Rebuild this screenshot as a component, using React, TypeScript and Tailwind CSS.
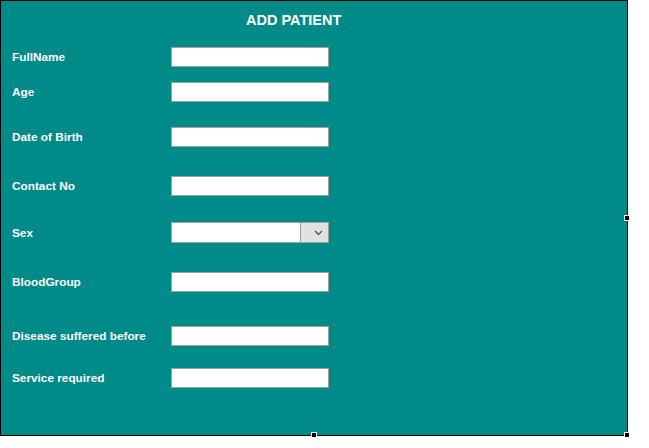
import { useState } from 'react';

const fields = [
  { label: 'FullName', mt: 'mt-[16px]' },
  { label: 'Age', mt: 'mt-[15px]' },
  { label: 'Date of Birth', mt: 'mt-[25px]' },
  { label: 'Contact No', mt: 'mt-[29px]' },
  { label: 'Sex', mt: 'mt-[26px]', select: true },
  { label: 'BloodGroup', mt: 'mt-[29px]' },
  { label: 'Disease suffered before', mt: 'mt-[34px]' },
  { label: 'Service required', mt: 'mt-[22px]' },
];

function Handle({ className }: { className: string }) {
  return <div className={`absolute w-[6px] h-[6px] bg-black border border-white ${className}`} />;
}

export default function App() {
  const [values, setValues] = useState<Record<string, string>>({});

  return (
    <div className="w-[649px] h-[448px] bg-white relative overflow-hidden font-['Liberation_Sans',Arial,sans-serif]">
      <div className="w-[628px] h-[436px] bg-[#008a88] border border-black flex flex-col">
        {/* Title */}
        <div className="mt-[10px] h-[20px] pl-[245px] flex items-center text-white font-bold text-[14.5px]">
          ADD PATIENT
        </div>

        {fields.map((f) => (
          <div key={f.label} className={`${f.mt} flex items-center ${f.select ? 'h-[21px]' : 'h-[20px]'}`}>
            <div className="w-[170px] pl-[11px] pt-[2px] text-white font-bold text-[11.8px] leading-none">{f.label}</div>
            {f.select ? (
              <div className="w-[158px] h-[21px] flex bg-white border border-[#a0a0a0]">
                <div className="flex-1" />
                <div className="w-[28px] h-full bg-[#e1e1e1] border-l border-[#a0a0a0] flex items-center justify-center">
                  <svg width="9" height="6" viewBox="0 0 9 6" className="ml-[8px] mt-[1px]">
                    <path d="M1 1 L4.5 4.5 L8 1" stroke="#444" strokeWidth="1.2" fill="none" />
                  </svg>
                </div>
              </div>
            ) : (
              <input
                value={values[f.label] ?? ''}
                onChange={(e) => setValues({ ...values, [f.label]: e.target.value })}
                className="w-[158px] h-[20px] bg-white border border-[#a0a0a0] outline-none px-1 text-[12px]"
              />
            )}
          </div>
        ))}
      </div>

      {/* designer resize handles */}
      <Handle className="left-[624px] top-[215px]" />
      <Handle className="left-[311px] top-[432px]" />
      <Handle className="left-[624px] top-[432px]" />
    </div>
  );
}
